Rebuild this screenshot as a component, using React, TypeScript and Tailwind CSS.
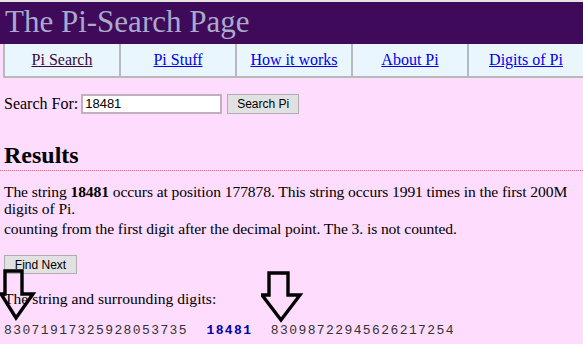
import React from "react";

function Arrow({ className, d }: { className: string; d: string }) {
  return (
    <svg className={className} viewBox="0 0 42 54" width="42" height="54" fill="none">
      <path d={d} stroke="#000" strokeWidth="3.4" strokeLinejoin="miter" />
    </svg>
  );
}

export default function App() {
  const links = ["Pi Search", "Pi Stuff", "How it works", "About Pi", "Digits of Pi"];
  return (
    <div
      className="relative w-[583px] h-[344px] overflow-hidden bg-[#fedcfe] text-black text-[16px]"
      style={{ fontFamily: '"Liberation Serif", "Times New Roman", serif' }}
    >
      <div className="h-[2px] bg-[#e4e4e4]" />
      <div className="h-[42px] bg-[#400a5a] pl-[5px] text-[31px] leading-[40px] text-[#a8abcc]">
        The Pi-Search Page
      </div>
      <div className="flex h-[34px] ml-[3px] border-l-2 border-b-2 border-[#b9b9b9] bg-[#e9f6fe]">
        {links.map((l, i) => (
          <div
            key={l}
            className={`flex-1 flex items-center justify-center ${i > 0 ? "border-l-2 border-[#b9b9b9]" : ""}`}
          >
            <a
              href="#"
              className={`underline ${i === 0 ? "text-[#3a0a3a]" : "text-[#0000ee]"}`}
            >
              {l}
            </a>
          </div>
        ))}
      </div>

      <div className="px-[4px]">
        <div className="mt-[16px] flex items-center h-[20px]">
          <span>Search For:</span>
          <div
            className="ml-[3px] w-[141px] h-[20px] border-2 border-[#c0b0c0] bg-white flex items-center pl-[2px] text-[13px]"
            style={{ fontFamily: '"Liberation Sans", Arial, sans-serif' }}
          >
            18481
          </div>
          <button
            className="ml-[5px] w-[72px] h-[20px] bg-[#e1e1e1] border border-[#adadad] text-[12px] flex items-center justify-center"
            style={{ fontFamily: '"Liberation Sans", Arial, sans-serif' }}
          >
            Search Pi
          </button>
        </div>

        <h2 className="mt-[27px] text-[24px] font-bold leading-[28px]">Results</h2>
        <div className="-mx-[4px] mt-[1px] border-b border-dotted border-[#f06080]" />

        <div className="mt-[12px] leading-[17px] text-[15.6px] tracking-[-0.1px]">
          The string <b>18481</b> occurs at position 177878. This string occurs 1991 times in the first 200M digits of Pi.
        </div>
        <div className="mt-[3px] leading-[17px] text-[15.6px] tracking-[-0.1px]">
          counting from the first digit after the decimal point. The 3. is not counted.
        </div>

        <button
          className="mt-[18px] w-[73px] h-[19px] bg-[#e1e1e1] border border-[#adadad] text-[12px] flex items-center justify-center"
          style={{ fontFamily: '"Liberation Sans", Arial, sans-serif' }}
        >
          Find Next
        </button>

        <div className="mt-[16px] leading-[18px] text-[15.6px]">The string and surrounding digits:</div>

        <div
          className="mt-[15px] text-[13px] leading-[15px] tracking-[1.4px] whitespace-pre text-[#333]"
          style={{ fontFamily: '"Liberation Mono", "Courier New", monospace' }}
        >
          83071917325928053735{"  "}
          <b className="text-[#0000aa]">18481</b>
          {"  "}83098722945626217254
        </div>
      </div>

      <Arrow className="absolute left-[0px] top-[269px]" d="M5 2 H22 V25 H33 L16 49 L1 25 H5 Z" />
      <Arrow className="absolute left-[261px] top-[271px]" d="M8 2 H27 V24 H39 L20 49 L1 24 H8 Z" />
    </div>
  );
}
